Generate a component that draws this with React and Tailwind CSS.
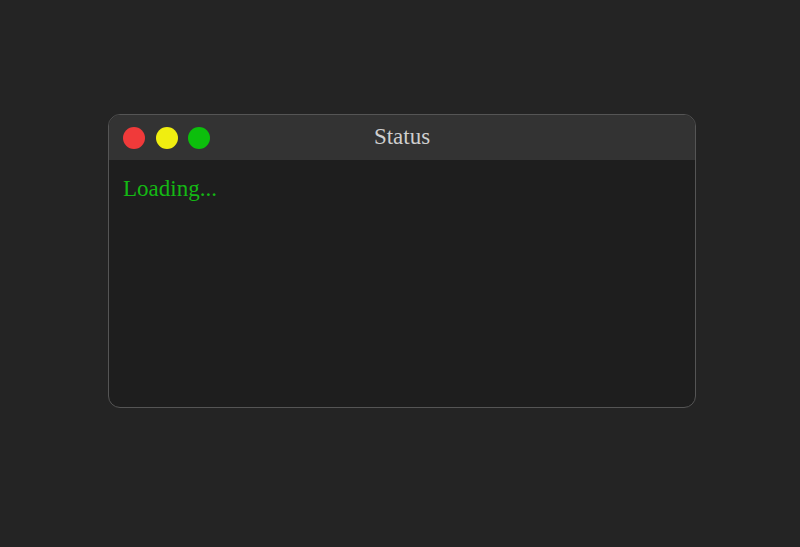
export default function App() {
  return (
    <div className="min-h-[547px] w-full bg-[#242424] pt-[114px] pl-[108px]" style={{ fontFamily: '"Liberation Serif", "Times New Roman", serif' }}>
      <div className="w-[588px] h-[294px] rounded-xl border border-[#555] bg-[#1e1e1e] overflow-hidden flex flex-col">
        <div className="relative h-[45px] bg-[#333] flex items-center px-[14px] gap-[10.5px] shrink-0">
          <span className="w-[22px] h-[22px] rounded-full bg-[#f03a3a]" />
          <span className="w-[22px] h-[22px] rounded-full bg-[#f0ee10]" />
          <span className="w-[22px] h-[22px] rounded-full bg-[#0cbf0c]" />
          <div className="absolute inset-0 flex items-center justify-center text-[23px] text-[#cfcfcf] pointer-events-none">
            Status
          </div>
        </div>
        <div className="flex-1 px-[14px] pt-[15px] text-[23px] text-[#14b814] leading-tight">
          Loading...
        </div>
      </div>
    </div>
  );
}
